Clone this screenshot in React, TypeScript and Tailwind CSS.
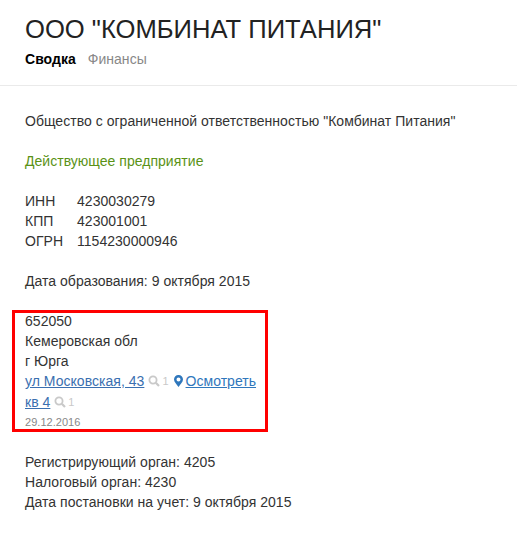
import React from "react";

function Search() {
  return (
    <svg width="12" height="12" viewBox="0 0 12 12" className="block" fill="none" stroke="#c9c9c9">
      <circle cx="5" cy="5" r="3.6" strokeWidth="1.8" />
      <path d="M7.800 7.800l3.200 3.200" strokeWidth="2.200" />
    </svg>
  );
}

function Count() {
  return (
    <span className="ml-[4px] inline-flex h-[14px] items-center gap-[2px] text-[11px] leading-[14px] text-[#c9c9c9]">
      <Search />1
    </span>
  );
}

export default function App() {
  return (
    <div className="h-[533px] w-[517px] overflow-hidden bg-white text-[14px] leading-[20px] tracking-[0.03px] text-[#333] font-['Liberation_Sans',Arial,sans-serif]">
      <header className="h-[86px] border-b border-[#eaeaea] px-[25px] pt-[12px]">
        <h1 className="text-[25.6px] leading-[34px] tracking-normal font-normal text-[#222]">ООО "КОМБИНАТ ПИТАНИЯ"</h1>
        <nav className="mt-[3px] flex gap-[12px]">
          <span className="font-bold text-black">Сводка</span>
          <span className="text-[#888]">Финансы</span>
        </nav>
      </header>
      <main className="px-[25px] pt-[25px]">
        <p>Общество с ограниченной ответственностью "Комбинат Питания"</p>
        <p className="mt-[20px] text-[#5a9216]">Действующее предприятие</p>
        <div className="mt-[20px] grid grid-cols-[52px_1fr]">
          <span>ИНН</span><span>4230030279</span>
          <span>КПП</span><span>423001001</span>
          <span>ОГРН</span><span>1154230000946</span>
        </div>
        <p className="mt-[20px]">Дата образования: 9 октября 2015</p>
        <div className="mt-[19px] -ml-[13px] w-[256px] border-[3px] border-[#ff0000] pl-[10px]">
          <div className="-mt-[2px]">652050</div>
          <div>Кемеровская обл</div>
          <div>г Юрга</div>
          <div className="flex h-[20px] items-center">
            <a className="text-[#3a6fb0] underline">ул Московская, 43</a>
            <Count />
            <svg width="9" height="12" viewBox="0 0 9 12" className="ml-[5px] block" fill="#2f77bc">
              <path fillRule="evenodd" d="M4.500 0A4.400 4.400 0 0 0 0 4.400C0 7 3 9.500 4.500 12 6 9.500 9 7 9 4.400A4.400 4.400 0 0 0 4.500 0zm0 2.400a2 2 0 1 1 0 4 2 2 0 0 1 0-4z" />
            </svg>
            <a className="ml-[3px] text-[#2f77bc] underline">Осмотреть</a>
          </div>
          <div className="mt-[1px] flex h-[20px] items-center">
            <a className="text-[#3a6fb0] underline">кв 4</a>
            <Count />
          </div>
          <div className="h-[17px] pt-[1px] text-[11px] leading-[18px] text-[#888]">29.12.2016</div>
        </div>
        <div className="mt-[20px]">
          <p>Регистрирующий орган: 4205</p>
          <p>Налоговый орган: 4230</p>
          <p>Дата постановки на учет: 9 октября 2015</p>
        </div>
      </main>
    </div>
  );
}
